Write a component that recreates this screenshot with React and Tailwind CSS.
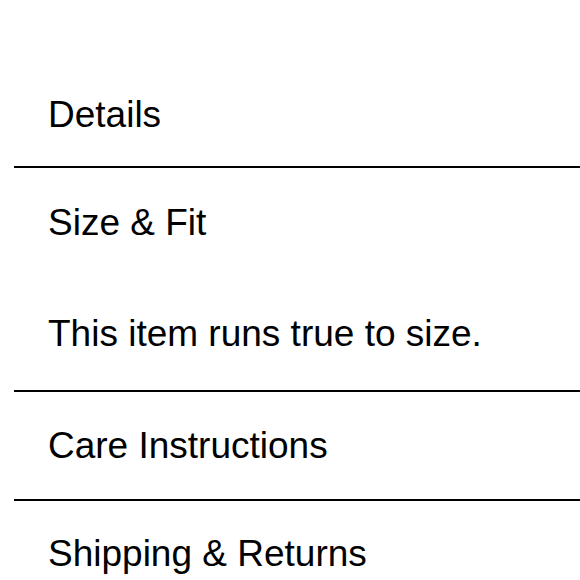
export default function App() {
  const font = { fontFamily: '"Liberation Sans", Arial, Helvetica, sans-serif' };
  return (
    <div className="w-[580px] h-[580px] overflow-hidden bg-white text-black" style={font}>
      <div className="pt-[60px] pl-[14px]">
        <div className="border-b-2 border-black">
          <div className="pl-[34px] pt-[34px] pb-[30px] text-[37px] leading-[42px]">Details</div>
        </div>
        <div className="border-b-2 border-black">
          <div className="pl-[34px] pt-[34px] pb-[30px] text-[37px] leading-[42px]">Size &amp; Fit</div>
          <div className="pl-[34px] pt-[39px] pb-[35px] text-[37px] leading-[42px]">This item runs true to size.</div>
        </div>
        <div className="border-b-2 border-black">
          <div className="pl-[34px] pt-[33px] pb-[32px] text-[37px] leading-[42px]">Care Instructions</div>
        </div>
        <div>
          <div className="pl-[34px] pt-[32px] pb-[30px] text-[37px] leading-[42px]">Shipping &amp; Returns</div>
        </div>
      </div>
    </div>
  );
}
